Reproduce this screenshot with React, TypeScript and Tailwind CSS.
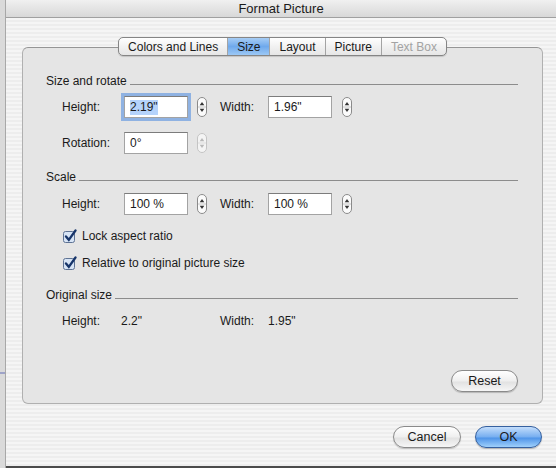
import React from "react";

const font = { fontFamily: '"Liberation Sans", Arial, sans-serif' };

function Stepper({ disabled = false }: { disabled?: boolean }) {
  const stroke = disabled ? "#c4c4c4" : "#8a8a8a";
  const arrow = disabled ? "#b8b8b8" : "#333";
  return (
    <svg width="10" height="20" viewBox="0 0 10 20" className="shrink-0">
      <rect x="0.5" y="0.5" width="9" height="19" rx="4.5" fill={disabled ? "#f4f4f4" : "#fbfbfb"} stroke={stroke} />
      <line x1="1" y1="10" x2="9" y2="10" stroke={disabled ? "#dcdcdc" : "#c8c8c8"} />
      <path d="M5 5 L7.3 8.2 H2.7Z" fill={arrow} />
      <path d="M5 15 L7.3 11.8 H2.7Z" fill={arrow} />
    </svg>
  );
}

function Field({ value, w = "w-[64px]", focus = false }: { value: string; w?: string; focus?: boolean }) {
  return (
    <div
      className={`${w} h-[22px] shrink-0 bg-white border border-[#a3a3a3] border-t-[#7c7c7c] flex items-center px-[5px] text-[12px] text-[#1a1a1a] ${
        focus ? "shadow-[0_0_0_3px_#8fb2e2]" : ""
      }`}
    >
      {focus ? <span className="bg-[#b5d3fb] leading-[15px]">{value}</span> : value}
    </div>
  );
}

function Check({ label }: { label: string }) {
  return (
    <div className="flex items-center h-[14px] pl-[17px] gap-[5px]">
      <svg width="14" height="14" viewBox="0 0 14 14" className="shrink-0">
        <rect x="0.5" y="2.5" width="11" height="11" rx="2" fill="#d7e4f5" stroke="#5e7394" />
        <path d="M3 7.5 L5.8 10.8 L12.5 1.5" fill="none" stroke="#17356a" strokeWidth="2.3" strokeLinecap="round" />
      </svg>
      <span className="text-[12px] text-[#1a1a1a]">{label}</span>
    </div>
  );
}

function Section({ title }: { title: string }) {
  return (
    <div className="flex items-end h-[14px] gap-[3px]">
      <span className="text-[12px] leading-[14px] text-[#1a1a1a]">{title}</span>
      <div className="flex-1 h-px bg-[#8c8c8c] mb-[3px]" />
    </div>
  );
}

function InputRow({ h, w, focus = false, hideWidth = false, disabled = false }: { h: string; w?: string; focus?: boolean; hideWidth?: boolean; disabled?: boolean }) {
  return (
    <div className="flex items-center h-[22px] pl-[16px] text-[12px] text-[#1a1a1a]">
      <span className="w-[62px] shrink-0">{hideWidth ? "Rotation:" : "Height:"}</span>
      <Field value={h} focus={focus} />
      <div className="w-[9px]" />
      <Stepper disabled={disabled} />
      {!hideWidth && (
        <>
          <span className="w-[48px] shrink-0 ml-[13px]">Width:</span>
          <Field value={w ?? ""} />
          <div className="w-[10px]" />
          <Stepper />
        </>
      )}
    </div>
  );
}

export default function App() {
  const tabs = ["Colors and Lines", "Size", "Layout", "Picture", "Text Box"];
  return (
    <div className="w-[556px] h-[468px] flex overflow-hidden bg-[#d6d6d6]" style={font}>
      <div className="w-[6px] shrink-0 bg-[#dadada] border-r border-[#a8a8a8] flex flex-col">
        <div className="h-[372px]" />
        <div className="h-[2px] bg-[#9ea3c8]" />
      </div>
      <div className="flex-1 flex flex-col">
        <div className="h-[18px] shrink-0 bg-[linear-gradient(#f0f0f0,#d8d8d8)] border-b border-[#a0a0a0] flex items-center justify-center text-[13px] text-[#1a1a1a]">
          Format Picture
        </div>
        <div className="flex-1 flex flex-col bg-[repeating-linear-gradient(0deg,#ededed_0px,#ededed_2px,#f5f5f5_2px,#f5f5f5_4px)] border-b-2 border-[#4a4a4a]">
          <div className="ml-[16px] mr-[13px] mt-[29px] h-[357px] rounded-[6px] bg-[#e5e5e5] border border-[#b0b0b0] border-t-[#959595] flex flex-col pl-[23px] pr-[24px]">
            <div className="flex justify-center -mt-[11px] h-[19px] -mr-[1px]">
              <div className="flex rounded-[5px] border border-[#858585] overflow-hidden bg-[linear-gradient(#ffffff,#f1f1f1_50%,#e6e6e6)] shadow-[0_1px_1px_rgba(0,0,0,0.15)]">
                {tabs.map((t, i) => (
                  <div
                    key={t}
                    className={`flex items-center text-[12px] px-[9px] ${i > 0 ? "border-l border-[#a3a3a3]" : ""} ${
                      t === "Size"
                        ? "bg-[linear-gradient(#a7cdf5,#6fa9ec_50%,#9cc8f5)] text-[#1a1a1a]"
                        : t === "Text Box"
                        ? "text-[#a3a3a3]"
                        : "text-[#1a1a1a]"
                    }`}
                  >
                    {t}
                  </div>
                ))}
              </div>
            </div>
            <div className="mt-[18px]">
              <Section title="Size and rotate" />
            </div>
            <div className="mt-[8px]">
              <InputRow h={'2.19"'} w={'1.96"'} focus />
            </div>
            <div className="mt-[14px]">
              <InputRow h="0°" hideWidth disabled />
            </div>
            <div className="mt-[16px]">
              <Section title="Scale" />
            </div>
            <div className="mt-[9px]">
              <InputRow h="100 %" w="100 %" />
            </div>
            <div className="mt-[14px]">
              <Check label="Lock aspect ratio" />
            </div>
            <div className="mt-[13px]">
              <Check label="Relative to original picture size" />
            </div>
            <div className="mt-[18px]">
              <Section title="Original size" />
            </div>
            <div className="mt-[12px] flex items-center h-[14px] pl-[16px] text-[12px] text-[#1a1a1a]">
              <span className="w-[59px]">Height:</span>
              <span className="w-[99px]">2.2"</span>
              <span className="w-[48px]">Width:</span>
              <span>1.95"</span>
            </div>
            <div className="mt-[42px] flex justify-end">
              <button className="w-[67px] h-[22px] rounded-full border border-[#8a8a8a] bg-[linear-gradient(#ffffff,#efefef_50%,#e2e2e2_55%,#f6f6f6)] text-[12.5px] text-[#1a1a1a] shadow-[0_1px_1px_rgba(0,0,0,0.2)]">
                Reset
              </button>
            </div>
          </div>
          <div className="mt-[22px] flex justify-end gap-[14px] mr-[14px]">
            <button className="w-[68px] h-[22px] rounded-full border border-[#8a8a8a] bg-[linear-gradient(#ffffff,#efefef_50%,#e2e2e2_55%,#f6f6f6)] text-[12.5px] text-[#1a1a1a] shadow-[0_1px_1px_rgba(0,0,0,0.2)]">
              Cancel
            </button>
            <button className="w-[67px] h-[22px] rounded-full border border-[#35609f] bg-[linear-gradient(#c3ddfb,#76aef0_50%,#4f94e8_55%,#9fd0fb)] text-[12.5px] text-[#1a1a1a] shadow-[0_1px_1px_rgba(0,0,0,0.25)]">
              OK
            </button>
          </div>
        </div>
      </div>
    </div>
  );
}
